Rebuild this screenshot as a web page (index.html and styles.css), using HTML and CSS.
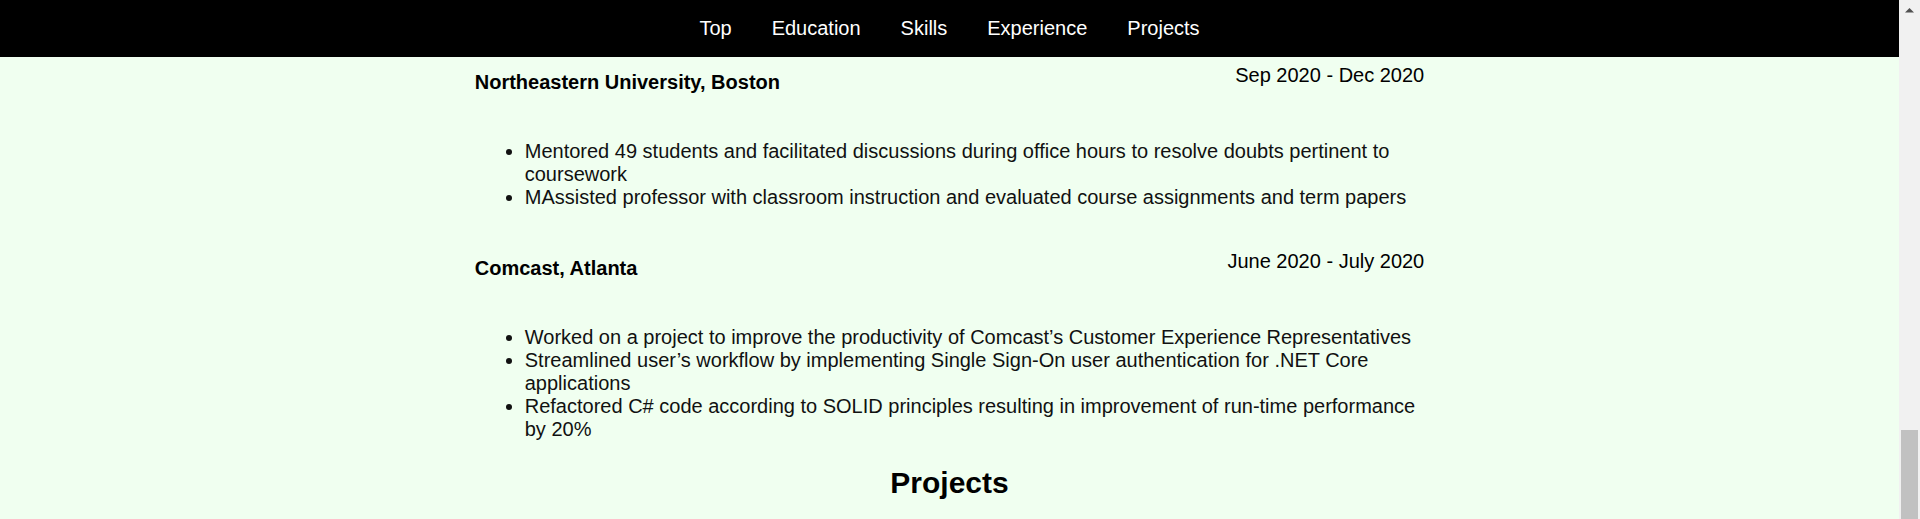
FILE: index.html
```html
<!DOCTYPE html>
<html lang="en">
<head>
<meta charset="utf-8">
<title>Resume</title>
<link rel="stylesheet" href="styles.css">
</head>
<body>
<div class="page">
  <nav class="topnav">
    <a class="nav-link" href="#top">Top</a>
    <a class="nav-link" href="#education">Education</a>
    <a class="nav-link" href="#skills">Skills</a>
    <a class="nav-link" href="#experience">Experience</a>
    <a class="nav-link" href="#projects">Projects</a>
  </nav>
  <main class="content">
    <section class="job">
      <div class="job-head">
        <h3 class="job-title">Northeastern University, Boston</h3>
        <span class="job-date">Sep 2020 - Dec 2020</span>
      </div>
      <ul class="job-points">
        <li>Mentored 49 students and facilitated discussions during office hours to resolve doubts pertinent to coursework</li>
        <li>MAssisted professor with classroom instruction and evaluated course assignments and term papers</li>
      </ul>
    </section>
    <section class="job">
      <div class="job-head">
        <h3 class="job-title">Comcast, Atlanta</h3>
        <span class="job-date">June 2020 - July 2020</span>
      </div>
      <ul class="job-points">
        <li>Worked on a project to improve the productivity of Comcast’s Customer Experience Representatives</li>
        <li>Streamlined user’s workflow by implementing Single Sign-On user authentication for .NET Core applications</li>
        <li>Refactored C# code according to SOLID principles resulting in improvement of run-time performance by 20%</li>
      </ul>
    </section>
    <h2 class="section-title" id="projects">Projects</h2>
  </main>
</div>
<div class="scrollbar">
  <svg class="scroll-arrow" width="21" height="17" viewBox="0 0 21 17"><polygon points="6,12.5 15,12.5 10.5,8" fill="#505050"/></svg>
  <div class="scroll-track"></div>
  <div class="scroll-thumb"></div>
</div>
</body>
</html>
```

FILE: styles.css
```css
html, body {
  height: 100%;
}
body {
  margin: 0;
  display: flex;
  overflow: hidden;
  font-family: "Liberation Sans", Arial, sans-serif;
  font-size: 20px;
  line-height: 23px;
  color: #000;
  background: #f0fff0;
}
.page {
  flex: 1;
  min-width: 0;
  overflow: hidden;
}
.topnav {
  display: flex;
  justify-content: center;
  gap: 40px;
  height: 57px;
  box-sizing: border-box;
  padding: 17px 0;
  background: #000;
}
.nav-link {
  color: #fff;
  text-decoration: none;
}
.content {
  width: 50%;
  margin: 0 auto;
  padding-top: 7px;
}
.job + .job {
  margin-top: 41px;
}
.job-head {
  display: flex;
  justify-content: space-between;
  align-items: flex-start;
}
.job-title {
  margin: 6.5px 0 0;
  font-size: 20px;
  font-weight: bold;
}
.job-points {
  margin: 46.5px 0 0;
  padding-left: 50px;
  color: #111;
}
.section-title {
  margin: 25px 0 0;
  font-size: 30px;
  line-height: 34px;
  text-align: center;
}
.scrollbar {
  width: 21px;
  flex: none;
  display: flex;
  flex-direction: column;
  background: #f1f1f1;
}
.scroll-arrow {
  display: block;
}
.scroll-track {
  flex: 1;
}
.scroll-thumb {
  height: 89px;
  margin: 0 2px;
  background: #c1c1c1;
}
```
